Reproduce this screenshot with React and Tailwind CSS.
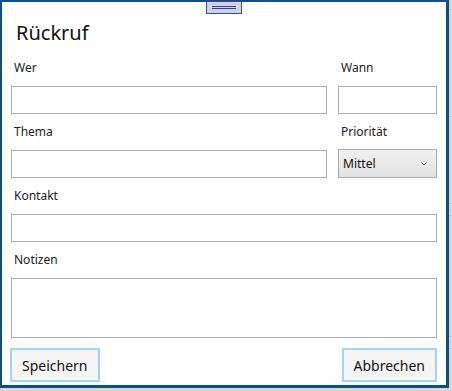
const font = { fontFamily: '"Noto Sans", "Open Sans", sans-serif' };

const Field = ({ label, className = '', children }) => (
  <div className={`flex flex-col ${className}`}>
    <label className="text-[12px] leading-[16px] text-[#1b1b1b] pl-[3px] mb-[10px]">{label}</label>
    {children}
  </div>
);

const TextBox = ({ tall }) => (
  <div className={`w-full ${tall ? 'h-[60px]' : 'h-[28px]'} border border-[#abadb3] bg-white`}></div>
);

const App = () => {
  return (
    <div className="w-[452px] h-[391px] bg-[#d7d7d7] relative overflow-hidden" style={font}>
      {/* underlying grid lines peeking out on the right */}
      <div className="absolute right-0 top-[9px] w-[4px] h-px bg-[#bcc3cb]"></div>
      <div className="absolute right-0 top-[116px] w-[4px] h-px bg-[#bcc3cb]"></div>
      <div className="absolute right-0 top-[203px] w-[4px] h-px bg-[#bcc3cb]"></div>
      <div className="absolute right-0 top-[215px] w-[4px] h-px bg-[#bcc3cb]"></div>
      <div className="absolute right-0 top-[336px] w-[4px] h-px bg-[#bcc3cb]"></div>
      <div className="absolute right-0 top-[348px] w-[4px] h-px bg-[#bcc3cb]"></div>

      <div className="relative w-[449px] h-[388px] bg-white border-l-2 border-t-2 border-r-[3px] border-b-[3px] border-[#0d4f84] flex flex-col px-[9px]">
        <div className="absolute left-[204px] top-[-1px] w-[36px] h-[13px] bg-[#c9d4ee] border border-[#48487f] flex flex-col items-center justify-center gap-[1px]">
          <div className="w-[24px] h-px bg-[#3f3f86]"></div>
          <div className="w-[24px] h-px bg-[#3f3f86]"></div>
        </div>

        <h1 className="text-[20px] leading-[28px] text-[#111] pl-[5px] mt-[17px] mb-[13px]">Rückruf</h1>

        <div className="grid grid-cols-[1fr_99px] gap-x-[11px] gap-y-[10px]">
          <Field label="Wer">
            <TextBox />
          </Field>
          <Field label="Wann">
            <TextBox />
          </Field>
          <Field label="Thema">
            <TextBox />
          </Field>
          <Field label="Priorität">
            <div className="h-[29px] -mt-[1px] w-full border border-[#acacac] bg-gradient-to-b from-[#f0f0f0] to-[#e3e3e3] flex items-center justify-between pl-[4px] pr-[9px]">
              <span className="text-[12px] text-[#111]">Mittel</span>
              <svg width="6" height="4" viewBox="0 0 6 4">
                <path d="M0.5 0.5 L3 3 L5.5 0.5" fill="none" stroke="#555" strokeWidth="1" />
              </svg>
            </div>
          </Field>
          <Field label="Kontakt" className="col-span-2">
            <TextBox />
          </Field>
          <Field label="Notizen" className="col-span-2">
            <TextBox tall />
          </Field>
        </div>

        <div className="flex justify-between mt-[10px]">
          <button className="h-[34px] -ml-px px-[10px] border-2 border-[#a3d4f3] bg-[#f5f5f5] text-[14px] text-[#111]">
            Speichern
          </button>
          <button className="h-[34px] px-[10px] border-2 border-[#a3d4f3] bg-[#f5f5f5] text-[14px] text-[#111]">
            Abbrechen
          </button>
        </div>
      </div>
    </div>
  );
};

export default App;
